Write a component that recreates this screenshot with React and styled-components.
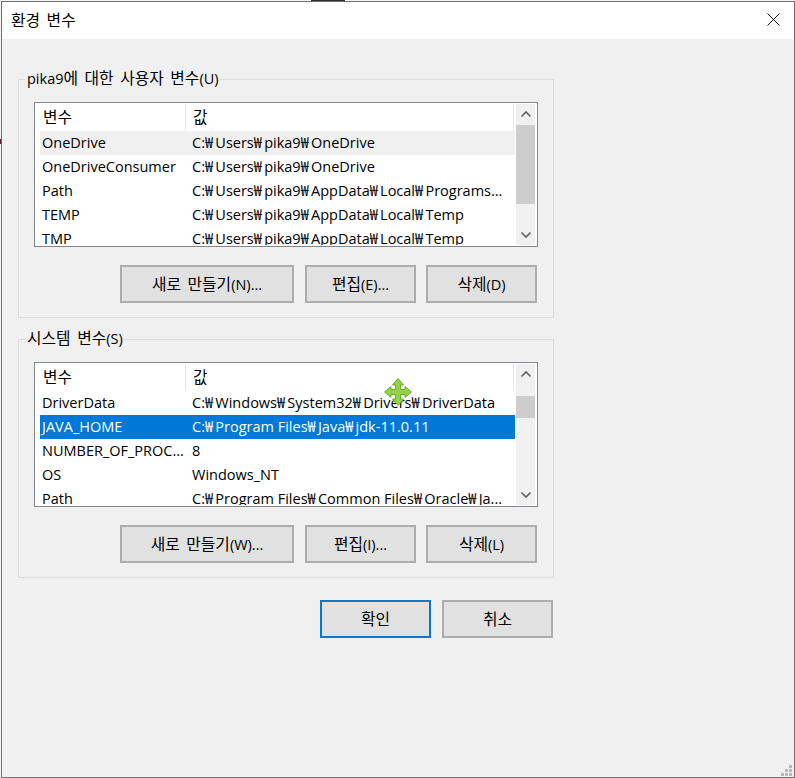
import React from 'react';
import styled, { createGlobalStyle } from 'styled-components';

const GlobalStyle = createGlobalStyle`
  html, body {
    margin: 0;
    padding: 0;
    background: #f4f4f4;
  }
  body {
    font-family: "Open Sans", "Noto Sans CJK KR", "Noto Sans", sans-serif;
    font-size: 14.5px;
    color: #000;
  }
`;

const Window = styled.div`
  position: relative;
  box-sizing: border-box;
  width: 794px;
  height: 777px;
  margin: 1px 0 0 1px;
  border: 1px solid #707070;
  background: #f0f0f0;
  overflow: hidden;
`;

// bits of whatever sits behind the dialog, showing at the screen edge
const TopStrip = styled.div`
  position: absolute;
  top: 0;
  left: 311px;
  width: 34px;
  height: 1px;
  background: #2b2b2b;
`;

const LeftMark = styled.div`
  position: absolute;
  top: 139px;
  left: 0;
  width: 1px;
  height: 5px;
  background: #5a1a3a;
`;

const TitleBar = styled.div`
  display: flex;
  align-items: center;
  justify-content: space-between;
  height: 37px;
  padding: 0 14px 2px 9px;
  box-sizing: border-box;
  background: #fff;
`;

const Title = styled.span`
  font-size: 15px;
`;

const Content = styled.div`
  padding: 40px 0 0 16px;
  width: 536px;
`;

const Group = styled.section`
  position: relative;
  box-sizing: border-box;
  height: 239px;
  margin-bottom: 21px;
  padding: 22px 15px 0;
  border: 1px solid #dcdcdc;
`;

const GroupTitle = styled.span`
  position: absolute;
  top: -12px;
  left: 7px;
  padding: 0 1px;
  background: #f0f0f0;
  line-height: 20px;
`;

const List = styled.div`
  display: flex;
  box-sizing: border-box;
  width: 504px;
  height: 145px;
  padding: 1px 2px 1px 5px;
  border: 1px solid #828790;
  background: #fff;
`;

const ListBody = styled.div`
  flex: 1;
  overflow: hidden;
`;

const HeaderRow = styled.div`
  display: grid;
  grid-template-columns: 145px 1fr;
  height: 27px;
  margin-right: 1px;
  border-right: 1px solid #e5e5e5;
  line-height: 26px;
`;

const HeaderCell = styled.div`
  padding-left: ${(p) => p.$inset}px;
  height: 26px;
  box-sizing: border-box;
  & + & {
    border-left: 1px solid #e5e5e5;
  }
`;

const Row = styled.div`
  display: grid;
  grid-template-columns: 145px 1fr;
  height: 24px;
  line-height: 24px;
  white-space: nowrap;
  background: ${(p) => (p.$selected ? '#0078d7' : p.$hover ? '#f0f0f0' : 'transparent')};
  color: ${(p) => (p.$selected ? '#fff' : '#000')};
`;

const NameCell = styled.div`
  padding-left: 2px;
  overflow: hidden;
`;

const ValueCell = styled.div`
  padding-left: 7px;
  overflow: hidden;
`;

const ScrollBar = styled.div`
  display: flex;
  flex-direction: column;
  width: 19px;
  margin-left: 1px;
  background: #f0f0f0;
`;

const ScrollArrow = styled.div`
  display: flex;
  align-items: center;
  justify-content: center;
  flex: none;
  height: 20px;
`;

const ScrollTrack = styled.div`
  flex: 1;
  padding-top: ${(p) => p.$offset}px;
`;

const ScrollThumb = styled.div`
  height: ${(p) => p.$size}px;
  background: #cdcdcd;
`;

const ButtonRow = styled.div`
  display: flex;
  justify-content: flex-end;
  gap: ${(p) => p.$gap || 10}px;
  margin-top: 18px;
  padding-right: 1px;
`;

const Button = styled.button`
  box-sizing: border-box;
  width: ${(p) => (p.$wide ? 174 : 111)}px;
  height: 38px;
  margin-right: ${(p) => (p.$wide ? 1 : 0)}px;
  padding: 0 0 2px;
  border: 2px solid ${(p) => (p.$primary ? '#0078d7' : '#adadad')};
  border-radius: 0;
  background: #e1e1e1;
  color: #000;
  font: inherit;
`;

const DialogActions = styled(ButtonRow)`
  margin-top: 22px;
`;

const Hangul = styled.span`
  font-family: "Noto Sans CJK KR", sans-serif;
  font-size: 15.8px;
  word-spacing: 3px;
`;

const Won = styled.span`
  letter-spacing: 2.3px;
`;

const CursorOverlay = styled.svg`
  position: absolute;
  left: 382px;
  top: 376px;
`;

const ResizeGrip = styled.svg`
  position: absolute;
  right: 1px;
  bottom: 0;
`;

const Label = ({ text }) =>
  text.split(/([\uAC00-\uD7A3]+(?: [\uAC00-\uD7A3]+)*|₩)/).map((part, i) => {
    if (part === '₩') return <Won key={i}>₩</Won>;
    if (/[\uAC00-\uD7A3]/.test(part)) return <Hangul key={i}>{part}</Hangul>;
    return part;
  });

const Chevron = ({ up }) => (
  <svg width="12" height="8" viewBox="0 0 12 8">
    <path
      d={up ? 'M1.5 6.5 L6 2 L10.5 6.5' : 'M1.5 1.5 L6 6 L10.5 1.5'}
      fill="none"
      stroke="#606060"
      strokeWidth="1.6"
    />
  </svg>
);

const VarList = ({ rows, thumbOffset, thumbSize }) => (
  <List>
    <ListBody>
      <HeaderRow>
        <HeaderCell $inset={3}><Label text="변수" /></HeaderCell>
        <HeaderCell $inset={7}><Label text="값" /></HeaderCell>
      </HeaderRow>
      {rows.map((r) => (
        <Row key={r.name} $hover={r.hover} $selected={r.selected}>
          <NameCell>{r.name}</NameCell>
          <ValueCell><Label text={r.value} /></ValueCell>
        </Row>
      ))}
    </ListBody>
    <ScrollBar>
      <ScrollArrow>
        <Chevron up />
      </ScrollArrow>
      <ScrollTrack $offset={thumbOffset}>
        <ScrollThumb $size={thumbSize} />
      </ScrollTrack>
      <ScrollArrow>
        <Chevron />
      </ScrollArrow>
    </ScrollBar>
  </List>
);

const userRows = [
  { name: 'OneDrive', value: 'C:₩Users₩pika9₩OneDrive', hover: true },
  { name: 'OneDriveConsumer', value: 'C:₩Users₩pika9₩OneDrive' },
  { name: 'Path', value: 'C:₩Users₩pika9₩AppData₩Local₩Programs...' },
  { name: 'TEMP', value: 'C:₩Users₩pika9₩AppData₩Local₩Temp' },
  { name: 'TMP', value: 'C:₩Users₩pika9₩AppData₩Local₩Temp' },
];

const systemRows = [
  { name: 'DriverData', value: 'C:₩Windows₩System32₩Drivers₩DriverData' },
  { name: 'JAVA_HOME', value: 'C:₩Program Files₩Java₩jdk-11.0.11', selected: true },
  { name: 'NUMBER_OF_PROC...', value: '8' },
  { name: 'OS', value: 'Windows_NT' },
  { name: 'Path', value: 'C:₩Program Files₩Common Files₩Oracle₩Ja...' },
];

export default function App() {
  return (
    <>
      <GlobalStyle />
      <TopStrip />
      <LeftMark />
      <Window>
        <TitleBar>
          <Title><Label text="환경 변수" /></Title>
          <svg width="13" height="13" viewBox="0 0 13 13">
            <path d="M0.5 0.5 L12.5 12.5 M12.5 0.5 L0.5 12.5" stroke="#111" strokeWidth="1" fill="none" />
          </svg>
        </TitleBar>
        <Content>
          <Group>
            <GroupTitle><Label text="pika9에 대한 사용자 변수(U)" /></GroupTitle>
            <VarList rows={userRows} thumbOffset={1} thumbSize={79} />
            <ButtonRow>
              <Button $wide><Label text="새로 만들기(N)..." /></Button>
              <Button><Label text="편집(E)..." /></Button>
              <Button><Label text="삭제(D)" /></Button>
            </ButtonRow>
          </Group>
          <Group>
            <GroupTitle><Label text="시스템 변수(S)" /></GroupTitle>
            <VarList rows={systemRows} thumbOffset={12} thumbSize={22} />
            <ButtonRow>
              <Button $wide><Label text="새로 만들기(W)..." /></Button>
              <Button><Label text="편집(I)..." /></Button>
              <Button><Label text="삭제(L)" /></Button>
            </ButtonRow>
          </Group>
          <DialogActions $gap={11}>
            <Button $primary><Label text="확인" /></Button>
            <Button><Label text="취소" /></Button>
          </DialogActions>
        </Content>
        <CursorOverlay width="28" height="28" viewBox="0 0 28 28">
          <path
            d="M14 0.5 L19.5 7 L16.5 7 L16.5 11.5 L21 11.5 L21 8.5 L27.5 14 L21 19.5 L21 16.5 L16.5 16.5 L16.5 21 L19.5 21 L14 27.5 L8.5 21 L11.5 21 L11.5 16.5 L7 16.5 L7 19.5 L0.5 14 L7 8.5 L7 11.5 L11.5 11.5 L11.5 7 L8.5 7 Z"
            fill="#93d149"
            stroke="#6fae28"
            strokeWidth="1"
          />
        </CursorOverlay>
        <ResizeGrip width="12" height="12" viewBox="0 0 12 12">
          <rect x="8" y="0" width="3" height="3" fill="#b8b8b8" />
          <rect x="4" y="4" width="3" height="3" fill="#b8b8b8" />
          <rect x="8" y="4" width="3" height="3" fill="#b8b8b8" />
          <rect x="0" y="8" width="3" height="3" fill="#b8b8b8" />
          <rect x="4" y="8" width="3" height="3" fill="#b8b8b8" />
          <rect x="8" y="8" width="3" height="3" fill="#b8b8b8" />
        </ResizeGrip>
      </Window>
    </>
  );
}
